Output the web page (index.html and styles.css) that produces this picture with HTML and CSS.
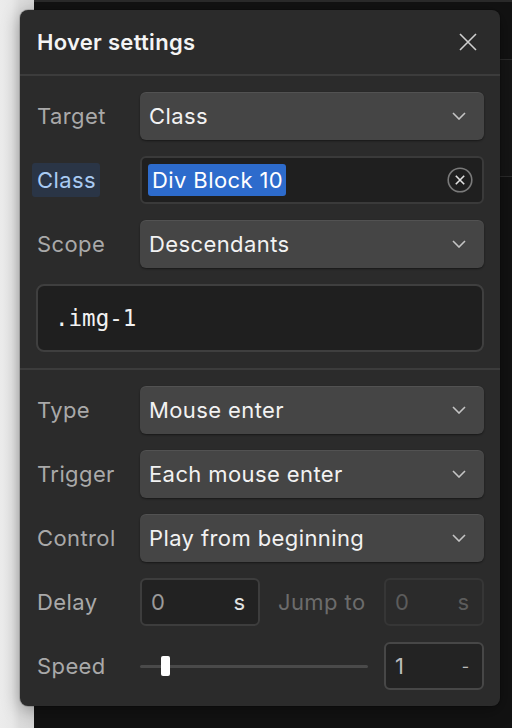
FILE: index.html
```html
<!DOCTYPE html>
<html>
<head>
<meta charset="utf-8">
<link rel="stylesheet" href="styles.css">
</head>
<body>
<div class="sidebar"></div>
<div class="canvas">
  <div class="canvas-main"></div>
  <div class="canvas-right"><div class="right-block"></div></div>
</div>

<div class="panel">
  <div class="panel-header">
    <h1 class="panel-title">Hover settings</h1>
    <svg class="close-icon" width="18" height="18" viewBox="0 0 18 18"><path d="M1 1 L17 17 M17 1 L1 17" stroke="#cfcfcf" stroke-width="1.6" fill="none"/></svg>
  </div>

  <div class="section">
    <div class="row">
      <span class="label">Target</span>
      <div class="select"><span class="value">Class</span><svg class="chev" width="14" height="8" viewBox="0 0 14 8"><path d="M1 1 L7 7 L13 1" stroke="#c4c4c4" stroke-width="1.6" fill="none"/></svg></div>
    </div>
    <div class="row">
      <span class="label label-active">Class</span>
      <div class="input-dark">
        <span class="tag">Div Block 10</span>
        <svg class="clear-icon" width="26" height="26" viewBox="0 0 26 26"><circle cx="13" cy="13" r="11.8" stroke="#7a7a7a" stroke-width="1.6" fill="none"/><path d="M8.8 8.8 L17.2 17.2 M17.2 8.8 L8.8 17.2" stroke="#e2e2e2" stroke-width="1.6" fill="none"/></svg>
      </div>
    </div>
    <div class="row">
      <span class="label">Scope</span>
      <div class="select"><span class="value">Descendants</span><svg class="chev" width="14" height="8" viewBox="0 0 14 8"><path d="M1 1 L7 7 L13 1" stroke="#c4c4c4" stroke-width="1.6" fill="none"/></svg></div>
    </div>
    <div class="code-box">.img-1</div>
  </div>

  <div class="section section-2">
    <div class="row">
      <span class="label">Type</span>
      <div class="select"><span class="value">Mouse enter</span><svg class="chev" width="14" height="8" viewBox="0 0 14 8"><path d="M1 1 L7 7 L13 1" stroke="#c4c4c4" stroke-width="1.6" fill="none"/></svg></div>
    </div>
    <div class="row">
      <span class="label">Trigger</span>
      <div class="select"><span class="value">Each mouse enter</span><svg class="chev" width="14" height="8" viewBox="0 0 14 8"><path d="M1 1 L7 7 L13 1" stroke="#c4c4c4" stroke-width="1.6" fill="none"/></svg></div>
    </div>
    <div class="row">
      <span class="label">Control</span>
      <div class="select"><span class="value">Play from beginning</span><svg class="chev" width="14" height="8" viewBox="0 0 14 8"><path d="M1 1 L7 7 L13 1" stroke="#c4c4c4" stroke-width="1.6" fill="none"/></svg></div>
    </div>
    <div class="row">
      <span class="label">Delay</span>
      <div class="pair">
        <div class="num-input num-delay"><span class="num-val">0</span><span class="unit">s</span></div>
        <span class="label label-disabled">Jump to</span>
        <div class="num-input num-disabled"><span class="num-val">0</span><span class="unit">s</span></div>
      </div>
    </div>
    <div class="row">
      <span class="label">Speed</span>
      <div class="pair">
        <div class="slider"><div class="track"></div><div class="thumb"></div></div>
        <div class="num-input num-speed"><span class="num-val">1</span><span class="unit">-</span></div>
      </div>
    </div>
  </div>
</div>
</body>
</html>
```

FILE: styles.css
```css
* { box-sizing: border-box; }
html, body { margin: 0; padding: 0; }
body {
  width: 512px;
  height: 728px;
  display: flex;
  overflow: hidden;
  font-family: Inter, "Noto Sans", sans-serif;
  background: #111;
}
.sidebar {
  width: 34px;
  background: linear-gradient(to right, #ececec 0, #e8e8e8 12px, #dcdcdc 20px, #d6d6d6 34px);
}
.canvas {
  flex: 1;
  display: flex;
  background: #121212;
  border-top: 2px solid #2a2a2a;
}
.canvas-main { flex: 1; }
.canvas-right {
  width: 12px;
  padding-top: 57px;
}
.right-block {
  height: 118px;
  border-top: 1px solid #2b2b2b;
  border-bottom: 1px solid #2b2b2b;
  background: #151515;
}

.panel {
  position: absolute;
  left: 20px;
  top: 10px;
  width: 480px;
  height: 696px;
  background: #2b2b2b;
  border-radius: 8px;
  box-shadow: 0 4px 18px rgba(0,0,0,0.35), 0 0 0 1px rgba(0,0,0,0.15);
  display: flex;
  flex-direction: column;
}
.panel-header {
  height: 66px;
  padding: 0 23px 0 17px;
  border-bottom: 2px solid #3c3c3c;
  display: flex;
  align-items: center;
  justify-content: space-between;
}
.panel-title {
  margin: 0;
  font-size: 22px;
  font-weight: 600;
  color: #f4f4f4;
  letter-spacing: 0.3px;
}
.close-icon { display: block; }

.section {
  padding: 16px;
  display: flex;
  flex-direction: column;
  gap: 16px;
}
.section-2 { border-top: 2px solid #3c3c3c; }

.row {
  height: 48px;
  display: grid;
  grid-template-columns: 104px 1fr;
  align-items: center;
}
.label {
  font-size: 22px;
  letter-spacing: 0.4px;
  color: #a9a9a9;
  padding-left: 1px;
  justify-self: start;
}
.label-active {
  background: #2a3546;
  color: #a9cbf3;
  border-radius: 3px;
  padding: 4px 4px 4px 5px;
  margin-left: -4px;
}
.label-disabled {
  color: #6c6c6c;
  padding-left: 0;
}

.select {
  height: 48px;
  background: #454545;
  border-radius: 6px;
  box-shadow: inset 0 1px 0 rgba(255,255,255,0.07), 0 1px 2px rgba(0,0,0,0.45);
  display: flex;
  align-items: center;
  justify-content: space-between;
  padding: 0 18px 0 9px;
}
.value {
  font-size: 22px;
  letter-spacing: 0.4px;
  color: #f2f2f2;
}
.chev { display: block; }

.input-dark {
  height: 48px;
  background: #1f1f1f;
  border: 2px solid #3a3a3a;
  border-radius: 6px;
  display: flex;
  align-items: center;
  justify-content: space-between;
  padding: 0 9px 0 6px;
}
.tag {
  height: 32px;
  display: flex;
  align-items: center;
  background: #2d6bcc;
  color: #ffffff;
  font-size: 22px;
  letter-spacing: 0.4px;
  padding: 0 3px 0 4px;
  border-radius: 3px;
}
.clear-icon { display: block; }

.code-box {
  height: 68px;
  background: #1f1f1f;
  border: 2px solid #3f3f3f;
  border-radius: 8px;
  display: flex;
  align-items: center;
  padding-left: 17px;
  font-family: "DejaVu Sans Mono", "Liberation Mono", monospace;
  font-size: 22.5px;
  color: #f2f2f2;
}

.pair {
  display: flex;
  align-items: center;
  height: 48px;
}
.num-input {
  height: 48px;
  border: 2px solid #3d3d3d;
  border-radius: 6px;
  background: #222;
  display: flex;
  align-items: center;
  justify-content: space-between;
  padding: 0 13px 0 9px;
  font-size: 22px;
}
.num-delay { width: 120px; margin-right: 18px; }
.num-delay .num-val { color: #9a9a9a; }
.num-delay .unit { color: #e2e2e2; }
.num-disabled {
  width: 100px;
  margin-left: auto;
  background: transparent;
  border-color: #363636;
}
.num-disabled .num-val, .num-disabled .unit { color: #5c5c5c; }
.num-speed {
  width: 100px;
  border-color: #474747;
  background: #232323;
}
.num-speed .num-val { color: #bcbcbc; }
.num-speed .unit { color: #bcbcbc; font-size: 16px; }

.slider {
  flex: 1;
  margin-right: 16px;
  height: 24px;
  position: relative;
  display: flex;
  align-items: center;
}
.track {
  width: 100%;
  height: 3px;
  border-radius: 2px;
  background: #4a4a4a;
}
.thumb {
  position: absolute;
  left: 21px;
  top: 2px;
  width: 9px;
  height: 20px;
  background: #fff;
  border-radius: 2px;
}
```
